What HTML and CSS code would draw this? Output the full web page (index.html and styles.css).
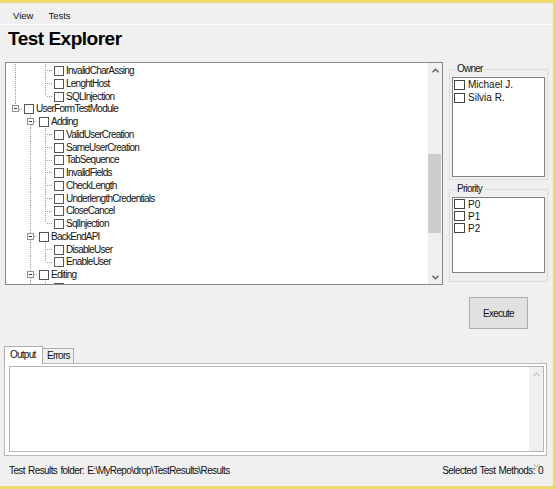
FILE: index.html
```html
<!DOCTYPE html>
<html>
<head>
<meta charset="utf-8">
<link rel="stylesheet" href="styles.css">
</head>
<body>
<div class="window">
  <div class="menubar"><span class="menu-item">View</span><span class="menu-item">Tests</span></div>
  <div class="menu-sep"></div>
  <h1 class="title">Test Explorer</h1>
  <div class="main">
    <div class="tree">
      <div class="tree-rows">
        <div class="row"><span class="cell line"></span><span class="cell"></span><span class="cell tee"></span><span class="cb"></span><span class="label">InvalidCharAssing</span></div>
        <div class="row"><span class="cell line"></span><span class="cell"></span><span class="cell tee"></span><span class="cb"></span><span class="label">LenghtHost</span></div>
        <div class="row"><span class="cell line"></span><span class="cell"></span><span class="cell end"></span><span class="cb"></span><span class="label">SQLInjection</span></div>
        <div class="row"><span class="cell end"><span class="exp"></span></span><span class="cb"></span><span class="label">UserFormTestModule</span></div>
        <div class="row"><span class="cell"></span><span class="cell tee"><span class="exp"></span></span><span class="cb"></span><span class="label">Adding</span></div>
        <div class="row"><span class="cell"></span><span class="cell line"></span><span class="cell tee"></span><span class="cb"></span><span class="label">ValidUserCreation</span></div>
        <div class="row"><span class="cell"></span><span class="cell line"></span><span class="cell tee"></span><span class="cb"></span><span class="label">SameUserCreation</span></div>
        <div class="row"><span class="cell"></span><span class="cell line"></span><span class="cell tee"></span><span class="cb"></span><span class="label">TabSequence</span></div>
        <div class="row"><span class="cell"></span><span class="cell line"></span><span class="cell tee"></span><span class="cb"></span><span class="label">InvalidFields</span></div>
        <div class="row"><span class="cell"></span><span class="cell line"></span><span class="cell tee"></span><span class="cb"></span><span class="label">CheckLength</span></div>
        <div class="row"><span class="cell"></span><span class="cell line"></span><span class="cell tee"></span><span class="cb"></span><span class="label">UnderlengthCredentials</span></div>
        <div class="row"><span class="cell"></span><span class="cell line"></span><span class="cell tee"></span><span class="cb"></span><span class="label">CloseCancel</span></div>
        <div class="row"><span class="cell"></span><span class="cell line"></span><span class="cell end"></span><span class="cb"></span><span class="label">SqlInjection</span></div>
        <div class="row"><span class="cell"></span><span class="cell tee"><span class="exp"></span></span><span class="cb"></span><span class="label">BackEndAPI</span></div>
        <div class="row"><span class="cell"></span><span class="cell line"></span><span class="cell tee"></span><span class="cb"></span><span class="label">DisableUser</span></div>
        <div class="row"><span class="cell"></span><span class="cell line"></span><span class="cell end"></span><span class="cb"></span><span class="label">EnableUser</span></div>
        <div class="row"><span class="cell"></span><span class="cell tee"><span class="exp"></span></span><span class="cb"></span><span class="label">Editing</span></div>
        <div class="row"><span class="cell"></span><span class="cell line"></span><span class="cell tee"></span><span class="cb"></span></div>
      </div>
      <div class="vscroll">
        <div class="sb-btn"><svg width="7" height="5" viewBox="0 0 7 5"><path d="M0.5 4.2 L3.5 1.2 L6.5 4.2" fill="none" stroke="#5a5a5a" stroke-width="1.3"/></svg></div>
        <div class="sb-track"><div class="sb-thumb"></div></div>
        <div class="sb-btn"><svg width="7" height="5" viewBox="0 0 7 5"><path d="M0.5 0.8 L3.5 3.8 L6.5 0.8" fill="none" stroke="#5a5a5a" stroke-width="1.3"/></svg></div>
      </div>
    </div>
    <div class="side">
      <fieldset class="group owner">
        <legend>Owner</legend>
        <div class="list">
          <div class="item"><span class="cb"></span><span>Michael J.</span></div>
          <div class="item"><span class="cb"></span><span>Silvia R.</span></div>
        </div>
      </fieldset>
      <fieldset class="group priority">
        <legend>Priority</legend>
        <div class="list">
          <div class="item"><span class="cb"></span><span>P0</span></div>
          <div class="item"><span class="cb"></span><span>P1</span></div>
          <div class="item"><span class="cb"></span><span>P2</span></div>
        </div>
      </fieldset>
      <button class="execute">Execute</button>
    </div>
  </div>
  <div class="tabs">
    <div class="tabstrip">
      <div class="tab active">Output</div>
      <div class="tab">Errors</div>
    </div>
    <div class="tabpage">
      <div class="textbox">
        <div class="text-area"></div>
        <div class="vscroll disabled">
          <div class="sb-btn"><svg width="7" height="5" viewBox="0 0 7 5"><path d="M0.5 4.2 L3.5 1.2 L6.5 4.2" fill="none" stroke="#c2c2c2" stroke-width="1.2"/></svg></div>
          <div class="sb-track"></div>
          <div class="sb-btn"><svg width="7" height="5" viewBox="0 0 7 5"><path d="M0.5 0.8 L3.5 3.8 L6.5 0.8" fill="none" stroke="#c2c2c2" stroke-width="1.2"/></svg></div>
        </div>
      </div>
    </div>
  </div>
  <div class="status">
    <span>Test Results folder: E:\MyRepo\drop\TestResults\Results</span>
    <span>Selected Test Methods: 0</span>
  </div>
</div>
</body>
</html>
```
FILE: styles.css
```css
* { box-sizing: border-box; }
body { margin: 0; background: #f0f0f0; }

.window {
  width: 556px;
  height: 489px;
  background: #f0f0f0;
  border-top: 3px solid #ecd86c;
  border-right: 3px solid #ecd86c;
  border-bottom: 3px solid #ecd86c;
  font-family: "Liberation Sans", Arial, sans-serif;
  font-size: 10px;
  letter-spacing: -0.75px;
  color: #000;
  display: flex;
  flex-direction: column;
  overflow: hidden;
}

.menubar {
  height: 21px;
  display: flex;
  padding: 4px 0 0 9px;
  font-size: 9.5px;
  letter-spacing: 0;
  line-height: 17px;
  color: #111;
}
.menu-item { padding: 0 4px; margin-right: 7px; }
.menu-sep { height: 1px; background: #fff; margin: 0 2px; }

.title {
  margin: 3px 0 0 8px;
  height: 22px;
  font: bold 19px/22px "Liberation Sans", Arial, sans-serif;
  letter-spacing: -0.5px;
  color: #000;
}

.main {
  display: flex;
  align-items: flex-start;
  gap: 6px;
  margin-top: 12px;
  padding-left: 5px;
}

.tree {
  width: 438px;
  height: 223px;
  border: 1px solid #828790;
  background: #fff;
  display: flex;
  flex: none;
}
.tree-rows {
  flex: 1;
  overflow: hidden;
  padding: 1px 0 0 2px;
}
.row {
  display: flex;
  align-items: center;
  height: 13px;
}
.row:nth-child(4n) { height: 12px; }
.cell {
  width: 15px;
  height: 100%;
  flex: none;
  display: flex;
  align-items: center;
}
.line {
  background: repeating-linear-gradient(to bottom, #a0a0a0 0 1px, transparent 1px 2px) 7px 0 / 1px 100% no-repeat;
}
.tee {
  background:
    repeating-linear-gradient(to right, #a0a0a0 0 1px, transparent 1px 2px) 9px 6px / 7px 1px no-repeat,
    repeating-linear-gradient(to bottom, #a0a0a0 0 1px, transparent 1px 2px) 7px 0 / 1px 100% no-repeat;
}
.end {
  background:
    repeating-linear-gradient(to right, #a0a0a0 0 1px, transparent 1px 2px) 9px 6px / 7px 1px no-repeat,
    repeating-linear-gradient(to bottom, #a0a0a0 0 1px, transparent 1px 2px) 7px 0 / 1px 6px no-repeat;
}
.exp {
  width: 7px;
  height: 7px;
  margin-left: 4px;
  margin-top: -1px;
  border: 1px solid #919191;
  background: linear-gradient(#333, #333) 1px 2px / 3px 1px no-repeat, #fff;
}
.cb {
  width: 10px;
  height: 10px;
  flex: none;
  border: 1px solid #555;
  background: #fff;
}
.row .cb { margin-left: 1px; }
.label {
  margin-left: 2px;
  line-height: 12px;
  white-space: nowrap;
  color: #111;
}

.vscroll {
  width: 14px;
  flex: none;
  background: #f0f0f0;
  display: flex;
  flex-direction: column;
}
.sb-btn {
  height: 14px;
  flex: none;
  display: flex;
  align-items: center;
  justify-content: center;
}
.sb-track { flex: 1; padding-top: 77px; }
.sb-thumb { height: 79px; margin-right: 1px; background: #cdcdcd; }

.side {
  width: 99px;
  flex: none;
  margin-top: 2px;
  display: flex;
  flex-direction: column;
}
.group {
  margin: 0;
  min-width: 0;
  padding: 3px 2px 2px 2px;
  border: 1px solid #dcdcdc;
}
.group legend {
  padding: 0 1px;
  margin-left: 4px;
  font-size: 10px;
  line-height: 10px;
  color: #111;
}
.list {
  background: #fff;
  border: 1px solid #828282;
}
.owner .list { height: 100px; }
.priority { margin-top: 4px; padding-bottom: 8px; }
.priority .list { height: 76px; }
.item {
  display: flex;
  align-items: center;
  height: 13px;
  padding-left: 1px;
  font-size: 10px;
  letter-spacing: 0;
  color: #111;
}
.priority .item { height: 12px; }
.item .cb { width: 11px; margin-right: 3px; border-color: #444; }

.execute {
  margin: 15px auto 0;
  width: 59px;
  height: 32px;
  padding: 0;
  border: 1px solid #adadad;
  background: #e1e1e1;
  font-family: "Liberation Sans", Arial, sans-serif;
  font-size: 10px;
  letter-spacing: -0.75px;
  color: #111;
}

.tabs { margin: 17px 6px 0 4px; }
.tabstrip {
  display: flex;
  align-items: flex-end;
  height: 17px;
}
.tab {
  height: 15px;
  width: 32px;
  margin-left: -1px;
  padding-left: 4px;
  border: 1px solid #acacac;
  border-bottom: none;
  background: #f0f0f0;
  line-height: 14px;
  color: #111;
}
.tab.active {
  position: relative;
  z-index: 1;
  margin-left: 0;
  width: 39px;
  height: 18px;
  margin-bottom: -1px;
  padding-left: 5px;
  background: #fff;
  line-height: 16px;
}
.tabpage {
  height: 93px;
  border: 1px solid #b9b9b9;
  background: #fff;
  padding: 2px 2px 3px 4px;
}
.textbox {
  height: 100%;
  border: 1px solid #b5b5b5;
  display: flex;
  background: #fff;
}
.text-area { flex: 1; }
.vscroll.disabled { width: 14px; }

.status {
  margin-top: 6px;
  height: 18px;
  line-height: 18px;
  display: flex;
  justify-content: space-between;
  padding: 0 10px 0 9px;
  letter-spacing: -0.6px;
  word-spacing: 1px;
  color: #111;
}
```
